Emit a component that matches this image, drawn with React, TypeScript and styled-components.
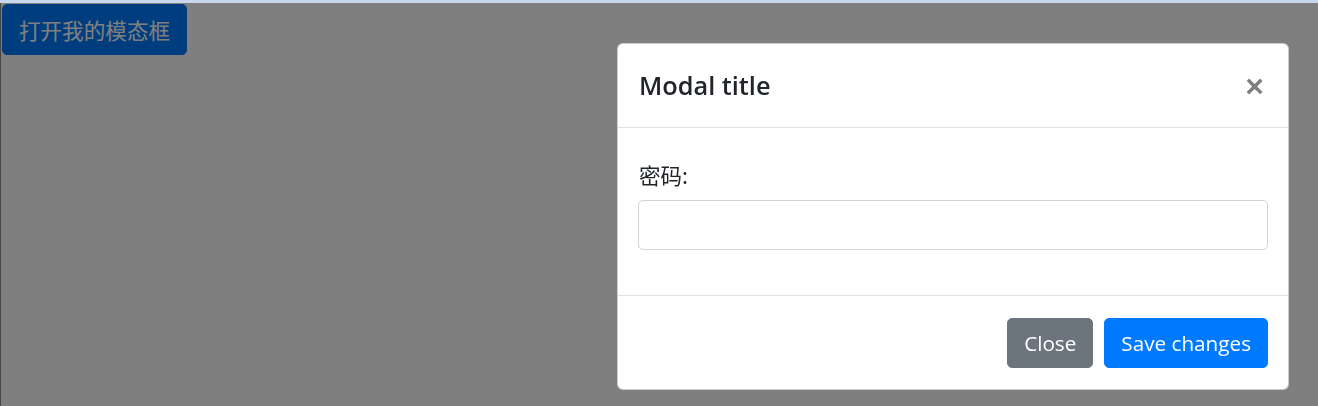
import React from "react";
import styled, { createGlobalStyle } from "styled-components";

const Global = createGlobalStyle`
  html, body { margin: 0; padding: 0; background: #fff; }
  body {
    font-family: "Open Sans", "Noto Sans CJK SC", sans-serif;
    color: #212529;
    width: 1318px;
    height: 406px;
    overflow: hidden;
  }
  * { box-sizing: border-box; }
`;

const Page = styled.div`
  padding: 4px 0 0 2px;
`;

const TopStrip = styled.div`
  position: fixed;
  top: 0;
  left: 0;
  right: 0;
  height: 3px;
  background: #c9d7ef;
  z-index: 30;
`;

const Btn = styled.button<{ $variant: "primary" | "secondary" }>`
  font-family: "Open Sans", "Noto Sans CJK SC", sans-serif;
  font-size: 20.7px;
  line-height: 32px;
  height: 51px;
  padding: 0 16px;
  border-radius: 5px;
  border: 1px solid ${(p) => (p.$variant === "primary" ? "#007bff" : "#6c757d")};
  background: ${(p) => (p.$variant === "primary" ? "#007bff" : "#6c757d")};
  color: #fff;
  cursor: pointer;
  white-space: nowrap;
`;

const OpenBtn = styled(Btn)`
  font-family: "Noto Sans CJK SC", sans-serif;
  font-size: 21.6px;
  width: 185px;
  padding: 0;
`;

const Backdrop = styled.div`
  position: fixed;
  inset: 0;
  background: rgba(0, 0, 0, 0.5);
  box-shadow: inset 1px 0 0 rgba(0, 0, 0, 0.45);
  z-index: 10;
`;

const Dialog = styled.div`
  position: fixed;
  left: 617px;
  top: 43px;
  width: 672px;
  background: #fff;
  border: 1px solid rgba(0, 0, 0, 0.2);
  border-radius: 6px;
  z-index: 20;
  display: flex;
  flex-direction: column;
`;

const Header = styled.div`
  display: flex;
  align-items: center;
  justify-content: space-between;
  padding: 21px 20px 21px 21px;
  border-bottom: 1px solid #dee2e6;
`;

const Title = styled.h5`
  margin: 0;
  font-family: "Open Sans", sans-serif;
  font-size: 25.3px;
  font-weight: 600;
  line-height: 41px;
  color: #212529;
`;

const CloseX = styled.span`
  font-family: "Liberation Sans", sans-serif;
  font-size: 32px;
  font-weight: 700;
  line-height: 1;
  color: #000;
  opacity: 0.5;
  margin-right: 4px;
`;

const Body = styled.div`
  padding: 31px 20px 45px 21px;
`;

const Label = styled.label`
  display: block;
  font-family: "Noto Sans CJK SC", sans-serif;
  font-size: 21.5px;
  line-height: 32px;
  margin-bottom: 9px;
  color: #212529;
`;

const Input = styled.input`
  display: block;
  width: calc(100% + 1px);
  margin-left: -1px;
  height: 50px;
  border: 1px solid #ced4da;
  border-radius: 5px;
  background: #fff;
  padding: 0 16px;
  font-size: 21px;
  outline: none;
`;

const Footer = styled.div`
  display: flex;
  justify-content: flex-end;
  gap: 11px;
  padding: 22px 20px 21px;
  border-top: 1px solid #dee2e6;
`;

const FooterBtn = styled(Btn)`
  height: 50px;
`;

export default function App() {
  return (
    <>
      <Global />
      <TopStrip />
      <Page>
        <OpenBtn $variant="primary">打开我的模态框</OpenBtn>
      </Page>
      <Backdrop />
      <Dialog>
        <Header>
          <Title>Modal title</Title>
          <CloseX>×</CloseX>
        </Header>
        <Body>
          <Label>密码:</Label>
          <Input type="password" />
        </Body>
        <Footer>
          <FooterBtn $variant="secondary">Close</FooterBtn>
          <FooterBtn $variant="primary">Save changes</FooterBtn>
        </Footer>
      </Dialog>
    </>
  );
}
